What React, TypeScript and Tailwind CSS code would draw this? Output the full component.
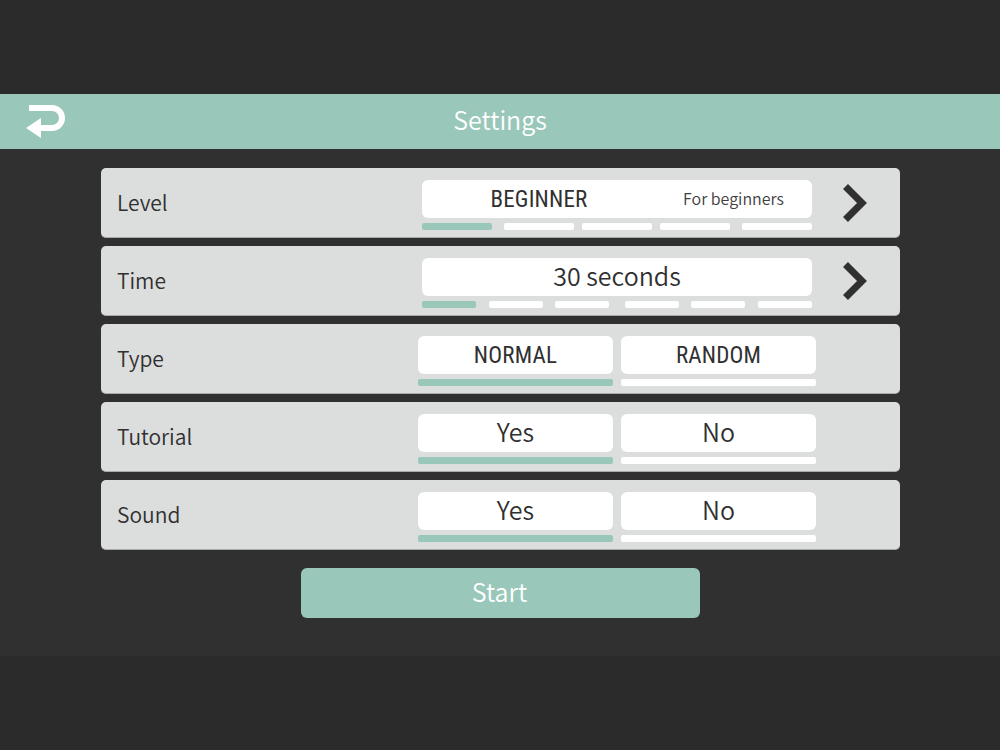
const font = "[font-family:'Noto_Sans_CJK_JP','Noto_Sans',sans-serif]";
const condensed = "font-['Roboto'] [font-stretch:condensed] text-[23px] tracking-[0.2px] pt-[3px]";

function Chevron() {
    return (
        <svg width="28" height="40" viewBox="0 0 28 40" className="shrink-0">
            <path d="M5.5 3.5 L22 20 L5.5 36.5" fill="none" stroke="#303030" strokeWidth="7" />
        </svg>
    );
}

function Bar({ on, className }: { on?: boolean; className?: string }) {
    return <div className={`h-[7px] rounded-[2px] ${on ? 'bg-[#99c7ba]' : 'bg-white'} ${className ?? ''}`} />;
}

function Row({ label, children }: { label: string; children: React.ReactNode }) {
    return (
        <div className="h-[70px] rounded-[5px] bg-[#dcdddd] border-b border-[#a9aaaa] flex">
            <div className="w-[317px] pl-4 pt-[19px] text-[21px] font-[350] leading-[30px] text-[#303030]">{label}</div>
            {children}
        </div>
    );
}

function Choice({ a, b, caps }: { a: string; b: string; caps?: boolean }) {
    const text = caps ? condensed : 'text-[25px] font-[350] pb-[2px]';
    return (
        <div className="pt-3 flex gap-2">
            {[a, b].map((t, i) => (
                <div key={t} className="w-[195px]">
                    <div className={`h-[38px] rounded-[6px] bg-white flex items-center justify-center text-[#303030] ${text}`}>
                        {t}
                    </div>
                    <Bar on={i === 0} className="mt-[5px]" />
                </div>
            ))}
        </div>
    );
}

function Picker({ bars, children }: { bars: React.ReactNode; children: React.ReactNode }) {
    return (
        <div className="flex">
            <div className="w-[390px] ml-1 pt-3">
                <div className="h-[38px] rounded-[6px] bg-white flex items-center text-[#303030]">{children}</div>
                <div className="mt-[5px] flex">{bars}</div>
            </div>
            <div className="ml-[28px] pt-[15px]">
                <Chevron />
            </div>
        </div>
    );
}

export default function App() {
    return (
        <div className={`min-h-screen h-[750px] bg-[#2b2b2b] pt-[94px] ${font}`}>
            <div className="h-[562px] bg-[#303030]">
                <header className="relative h-[55px] bg-[#99c7ba] flex items-center justify-center pb-[3px] text-[25px] font-[350] text-white">
                    <svg width="42" height="38" viewBox="0 0 42 38" className="absolute left-[25px] top-[8px]">
                        <path d="M4 6 H27 A10 10 0 0 1 27 26 H15" fill="none" stroke="#fff" strokeWidth="6" />
                        <path d="M1 26 L16 16 V36 Z" fill="#fff" />
                    </svg>
                    Settings
                </header>

                <main className="w-[799px] ml-[101px] pt-[19px] flex flex-col gap-2">
                    <Row label="Level">
                        <Picker
                            bars={
                                <>
                                    <Bar on className="w-[70px]" />
                                    <Bar className="w-[70px] ml-3" />
                                    <Bar className="w-[70px] ml-2" />
                                    <Bar className="w-[70px] ml-2" />
                                    <Bar className="w-[70px] ml-3" />
                                </>
                            }
                        >
                            <span className={`w-[234px] text-center ${condensed}`}>BEGINNER</span>
                            <span className="text-[16px] font-[350] text-[#404040] ml-[27px] pb-[2px]">For beginners</span>
                        </Picker>
                    </Row>
                    <Row label="Time">
                        <Picker
                            bars={
                                <>
                                    <Bar on className="w-[54px]" />
                                    <Bar className="w-[54px] ml-[13px]" />
                                    <Bar className="w-[54px] ml-3" />
                                    <Bar className="w-[54px] ml-4" />
                                    <Bar className="w-[54px] ml-3" />
                                    <Bar className="w-[54px] ml-[13px]" />
                                </>
                            }
                        >
                            <span className="w-full text-center text-[25px] font-[350] pb-[2px]">30 seconds</span>
                        </Picker>
                    </Row>
                    <Row label="Type">
                        <Choice a="NORMAL" b="RANDOM" caps />
                    </Row>
                    <Row label="Tutorial">
                        <Choice a="Yes" b="No" />
                    </Row>
                    <Row label="Sound">
                        <Choice a="Yes" b="No" />
                    </Row>
                    <button className="mt-[10px] ml-[200px] w-[399px] h-[50px] rounded-[6px] bg-[#99c7ba] pb-[2px] pr-[2px] text-white text-[25px] font-[350]">
                        Start
                    </button>
                </main>
            </div>
        </div>
    );
}
